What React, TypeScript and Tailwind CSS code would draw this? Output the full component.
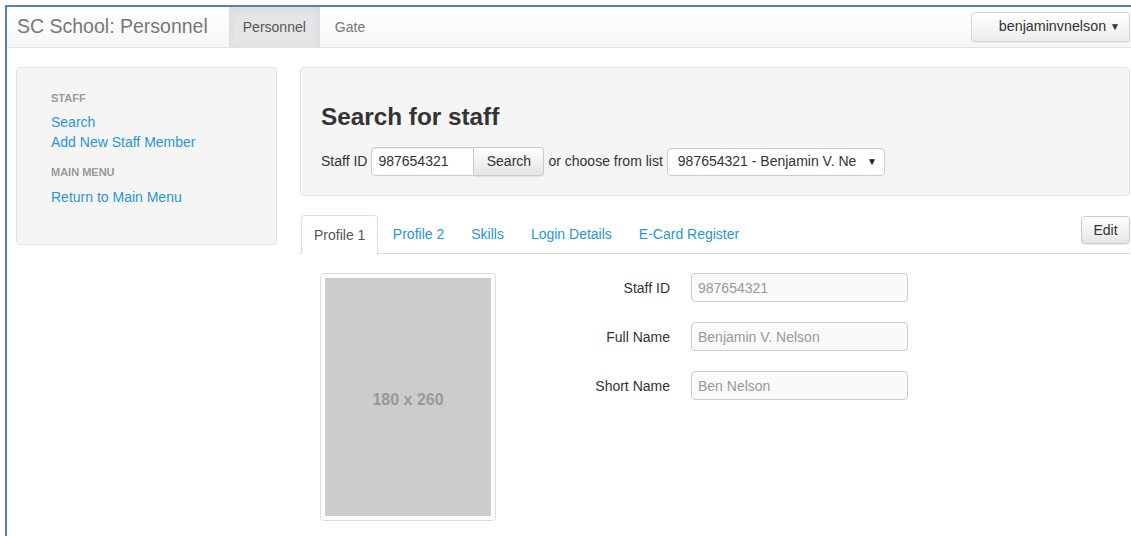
const sideLinks = [
  { header: "STAFF", links: ["Search", "Add New Staff Member"] },
  { header: "MAIN MENU", links: ["Return to Main Menu"] },
];

const tabs = ["Profile 1", "Profile 2", "Skills", "Login Details", "E-Card Register"];

const fields = [
  { label: "Staff ID", value: "987654321" },
  { label: "Full Name", value: "Benjamin V. Nelson" },
  { label: "Short Name", value: "Ben Nelson" },
];

export default function App() {
  return (
    <div className="min-h-screen bg-white pl-[5px] pt-[5px] font-['Liberation_Sans',Arial,sans-serif] text-[14px] text-[#333]">
      <div className="min-h-[531px] overflow-hidden border-l-2 border-t-2 border-[#4f81c7] bg-white">
        {/* Top navbar */}
        <div className="flex h-[41px] items-stretch border-b border-[#e3e3e3] bg-gradient-to-b from-white to-[#f6f6f6]">
          <div className="flex items-center pl-[10px] pr-[21px] text-[19.5px] text-[#777]">SC School: Personnel</div>
          <div className="flex items-center bg-[#e5e5e5] px-[14px] text-[#555] shadow-[inset_0_3px_8px_rgba(0,0,0,0.06)]">Personnel</div>
          <div className="flex items-center px-[15px] text-[#777]">Gate</div>
          <div className="ml-auto flex items-center pr-[1px]">
            <button className="flex h-[30px] w-[159px] items-center justify-end gap-[4px] rounded-[4px] border border-[#d5d5d5] bg-gradient-to-b from-white to-[#ececec] pr-[9px] text-[14.3px] text-[#333] shadow-[0_1px_1px_rgba(0,0,0,0.06)]">
              benjaminvnelson
              <span className="text-[10px] leading-none">▼</span>
            </button>
          </div>
        </div>

        <div className="flex items-start pl-[9px] pt-[19px]">
          {/* Sidebar */}
          <div className="h-[178px] w-[261px] shrink-0 rounded-[4px] border border-[#e3e3e3] bg-[#f5f5f5] pl-[34px] pt-[20px]">
            {sideLinks.map((group, i) => (
              <div key={group.header} className={i > 0 ? "mt-[10px]" : ""}>
                <div className="text-[11px] font-bold leading-[20px] text-[#999]">{group.header}</div>
                <div className={i > 0 ? "mt-[5px]" : "mt-[4px]"}>
                  {group.links.map((l) => (
                    <div key={l} className="leading-[20px] text-[#2a96d5]">{l}</div>
                  ))}
                </div>
              </div>
            ))}
          </div>

          {/* Main */}
          <div className="ml-[23px] w-[830px] shrink-0">
            <div className="h-[129px] rounded-[4px] border border-[#e3e3e3] bg-[#f5f5f5] pl-[20px] pt-[35px]">
              <h1 className="text-[24.3px] font-bold leading-[28px] text-[#333]">Search for staff</h1>
              <div className="mt-[16px] flex h-[29px] items-center">
                <span>Staff ID</span>
                <div className="ml-[4px] flex h-[29px] w-[103px] items-center rounded-l-[4px] border border-[#ccc] bg-white pl-[6px] shadow-[inset_0_1px_1px_rgba(0,0,0,0.07)]">
                  987654321
                </div>
                <button className="flex h-[29px] w-[70px] items-center justify-center rounded-r-[4px] border border-l-0 border-[#ccc] bg-gradient-to-b from-white to-[#e4e4e4] shadow-[0_1px_1px_rgba(0,0,0,0.08)]">
                  Search
                </button>
                <span className="ml-[4px]">or choose from list</span>
                <div className="ml-[4px] flex h-[28px] w-[218px] items-center rounded-[4px] border border-[#ccc] bg-white pl-[10px] pr-[7px]">
                  <span className="flex-1 overflow-hidden whitespace-nowrap">987654321 - Benjamin V. Ne</span>
                  <span className="ml-[4px] text-[10px] text-[#222]">▼</span>
                </div>
              </div>
            </div>

            {/* Tabs */}
            <div className="mt-[19px] flex h-[39px] items-stretch border-b border-[#ddd]">
              {tabs.map((t, i) =>
                i === 0 ? (
                  <div key={t} className="-mb-px ml-[1px] mr-[2px] flex items-center rounded-t-[4px] border border-b-0 border-[#ddd] bg-white px-[12px] text-[#555]">
                    {t}
                  </div>
                ) : (
                  <div key={t} className="mr-[2px] flex items-center px-[12.5px] text-[#2a96d5]">
                    {t}
                  </div>
                )
              )}
              <div className="ml-auto self-start pt-[1px]">
                <button className="flex h-[28px] w-[49px] items-center justify-center rounded-[4px] border border-[#ccc] bg-gradient-to-b from-white to-[#e6e6e6] shadow-[0_1px_1px_rgba(0,0,0,0.08)]">
                  Edit
                </button>
              </div>
            </div>

            {/* Profile 1 */}
            <div className="flex items-start pl-[20px] pt-[19px]">
              <div className="h-[248px] w-[176px] shrink-0 rounded-[4px] border border-[#ddd] bg-white p-[4px]">
                <div className="flex h-full w-full items-center justify-center bg-[#ccc] pt-[6px] text-[16px] font-bold text-[#999]">
                  180 x 260
                </div>
              </div>
              <div className="grid grid-cols-[174px_217px] gap-x-[21px] gap-y-[20px]">
                {fields.map((f) => (
                  <div key={f.label} className="contents">
                    <label className="flex h-[29px] items-center justify-end pt-[1px]">{f.label}</label>
                    <div className="flex h-[29px] items-center rounded-[4px] border border-[#ccc] bg-[#fafafa] pl-[6px] pt-[1px] text-[#999]">
                      {f.value}
                    </div>
                  </div>
                ))}
              </div>
            </div>
          </div>
        </div>
      </div>
    </div>
  );
}
